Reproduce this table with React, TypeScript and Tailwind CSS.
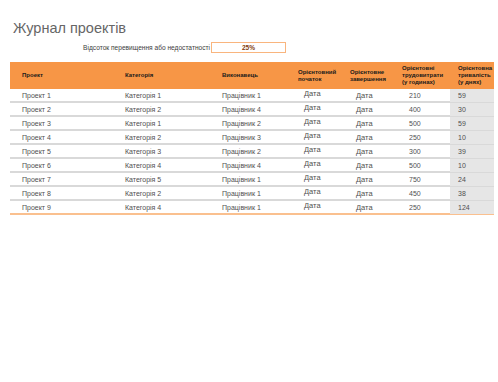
const rows = [
  ["Проект 1", "Категорія 1", "Працівник 1", "210", "59"],
  ["Проект 2", "Категорія 2", "Працівник 4", "400", "30"],
  ["Проект 3", "Категорія 1", "Працівник 2", "500", "59"],
  ["Проект 4", "Категорія 2", "Працівник 3", "250", "10"],
  ["Проект 5", "Категорія 3", "Працівник 2", "300", "39"],
  ["Проект 6", "Категорія 4", "Працівник 4", "500", "10"],
  ["Проект 7", "Категорія 5", "Працівник 1", "750", "24"],
  ["Проект 8", "Категорія 2", "Працівник 1", "450", "38"],
  ["Проект 9", "Категорія 4", "Працівник 1", "250", "124"],
];

const GRID = "grid grid-cols-[103px_97px_76px_52px_52px_60px_44px]";

export default function App() {
  return (
    <div
      className="w-[498px] h-[382px] bg-white overflow-hidden text-[#404040]"
      style={{ fontFamily: '"Liberation Sans", Arial, sans-serif' }}
    >
      <h1 className="pl-[13px] pt-[19px] text-[14.5px] leading-[18px] font-light text-[#666666]">
        Журнал проектів
      </h1>

      {/* Percent row */}
      <div className="flex items-center h-[11px] mt-[5px]">
        <div className="w-[211px] pr-[1px] text-right text-[6.6px] leading-[11px] text-[#404040] whitespace-nowrap">
          Відсоток перевищення або недостатності
        </div>
        <div className="w-[75px] h-[11px] border border-[#f9b57e] flex items-center justify-center text-[6.5px] font-bold text-[#843c0c]">
          25%
        </div>
      </div>

      {/* Table */}
      <div className="ml-[10px] mt-[9px] w-[484px]">
        <div className={`${GRID} h-[27px] bg-[#f79646] items-center text-[6px] leading-[7px] font-bold text-[#1a1a1a]`}>
          <div className="pl-[12px]">Проект</div>
          <div className="pl-[12px]">Категорія</div>
          <div className="pl-[12px]">Виконавець</div>
          <div className="pl-[12px]">Орієнтовний<br />початок</div>
          <div className="pl-[12px]">Орієнтовне<br />завершення</div>
          <div className="pl-[12px]">Орієнтовні<br />трудовитрати<br />(у годинах)</div>
          <div className="pl-[8px] whitespace-nowrap">Орієнтовна<br />тривалість<br />(у днях)</div>
        </div>
        {rows.map((r, i) => (
          <div
            key={i}
            className={`${GRID} h-[14px] text-[7px] leading-[12px] text-[#505050] border-b-2 ${
              i === rows.length - 1 ? "border-[#fac08f]" : "border-[#d9d9d9]"
            }`}
          >
            <div className="pl-[12px] pt-[1px]">{r[0]}</div>
            <div className="pl-[12px] pt-[1px]">{r[1]}</div>
            <div className="pl-[12px] pt-[1px]">{r[2]}</div>
            <div className="pl-[18px] text-[7.5px] leading-[10px]">Дата</div>
            <div className="pl-[18px] pt-[2px] text-[7.5px] leading-[10px]">Дата</div>
            <div className="pl-[19px] pt-[1px]">{r[3]}</div>
            <div className="pl-[8px] pt-[1px] bg-[#e6e6e6]">{r[4]}</div>
          </div>
        ))}
      </div>
    </div>
  );
}
